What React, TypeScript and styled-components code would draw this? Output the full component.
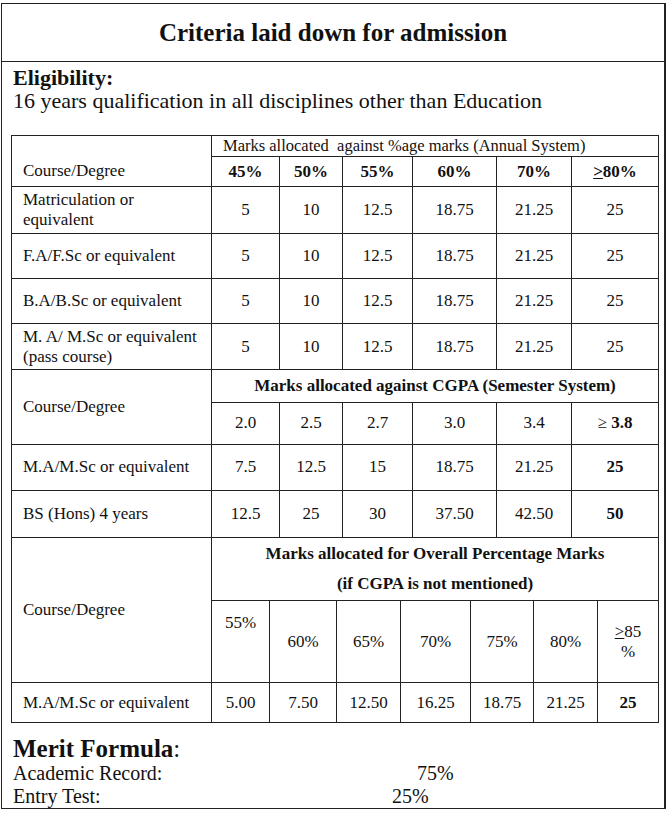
import React from "react";
import styled, { createGlobalStyle } from "styled-components";

const GlobalStyle = createGlobalStyle`
  body {
    margin: 0;
    background: #fff;
    color: #111;
    font-family: "Liberation Serif", "Times New Roman", serif;
  }
`;

type Mark = { text: React.ReactNode; bold?: boolean };

const annualRows: { course: React.ReactNode; height: number; marks: string[] }[] = [
  {
    course: (
      <>
        Matriculation or
        <br />
        equivalent
      </>
    ),
    height: 47,
    marks: ["5", "10", "12.5", "18.75", "21.25", "25"],
  },
  { course: "F.A/F.Sc or equivalent", height: 45, marks: ["5", "10", "12.5", "18.75", "21.25", "25"] },
  { course: "B.A/B.Sc or equivalent", height: 45, marks: ["5", "10", "12.5", "18.75", "21.25", "25"] },
  {
    course: (
      <>
        M. A/ M.Sc or equivalent
        <br />
        (pass course)
      </>
    ),
    height: 46,
    marks: ["5", "10", "12.5", "18.75", "21.25", "25"],
  },
];

const cgpaRows: { course: string; height: number; marks: Mark[] }[] = [
  {
    course: "M.A/M.Sc or equivalent",
    height: 46,
    marks: [{ text: "7.5" }, { text: "12.5" }, { text: "15" }, { text: "18.75" }, { text: "21.25" }, { text: "25", bold: true }],
  },
  {
    course: "BS (Hons) 4 years",
    height: 47,
    marks: [{ text: "12.5" }, { text: "25" }, { text: "30" }, { text: "37.50" }, { text: "42.50" }, { text: "50", bold: true }],
  },
];

const overallMarks: Mark[] = [
  { text: "5.00" },
  { text: "7.50" },
  { text: "12.50" },
  { text: "16.25" },
  { text: "18.75" },
  { text: "21.25" },
  { text: "25", bold: true },
];

const sixCols = [200, 68, 63, 70, 84, 75, 87];
const sevenCols = [200, 58, 67, 64, 70, 63, 64, 61];

export default function App() {
  return (
    <>
      <GlobalStyle />
      <Frame>
        <Title>Criteria laid down for admission</Title>

        <Eligibility>
          <Heading>Eligibility:</Heading>
          16 years qualification in all disciplines other than Education
        </Eligibility>

        <Tables>
          <Grid>
            <Cols widths={sixCols} />
            <tbody>
              <Row $height={20}>
                <Cell rowSpan={2} $align="left" $valign="bottom">
                  Course/Degree
                </Cell>
                <Cell colSpan={6} $align="left" $small>
                  Marks allocated&nbsp; against %age marks (Annual System)
                </Cell>
              </Row>
              <Row $height={30}>
                {["45%", "50%", "55%", "60%", "70%"].map((m) => (
                  <Cell key={m} $bold>
                    {m}
                  </Cell>
                ))}
                <Cell $bold>
                  <u>&gt;</u>80%
                </Cell>
              </Row>
              {annualRows.map((row, i) => (
                <Row key={i} $height={row.height}>
                  <Cell $align="left">{row.course}</Cell>
                  {row.marks.map((m, j) => (
                    <Cell key={j}>{m}</Cell>
                  ))}
                </Row>
              ))}
            </tbody>
          </Grid>

          <Grid>
            <Cols widths={sixCols} />
            <tbody>
              <Row $height={32}>
                <Cell rowSpan={2} $align="left">
                  Course/Degree
                </Cell>
                <Cell colSpan={6} $bold>
                  Marks allocated against CGPA (Semester System)
                </Cell>
              </Row>
              <Row $height={42}>
                {["2.0", "2.5", "2.7", "3.0", "3.4"].map((m) => (
                  <Cell key={m}>{m}</Cell>
                ))}
                <Cell>
                  ≥ <b>3.8</b>
                </Cell>
              </Row>
              {cgpaRows.map((row) => (
                <Row key={row.course} $height={row.height}>
                  <Cell $align="left">{row.course}</Cell>
                  {row.marks.map((m, j) => (
                    <Cell key={j} $bold={m.bold}>
                      {m.text}
                    </Cell>
                  ))}
                </Row>
              ))}
            </tbody>
          </Grid>

          <Grid>
            <Cols widths={sevenCols} />
            <tbody>
              <Row $height={63}>
                <Cell rowSpan={2} $align="left">
                  Course/Degree
                </Cell>
                <Cell colSpan={7} $bold $lineHeight={30}>
                  Marks allocated for Overall Percentage Marks
                  <br />
                  (if CGPA is not mentioned)
                </Cell>
              </Row>
              <Row $height={82}>
                <Cell $valign="top" $padTop={12}>
                  55%
                </Cell>
                {["60%", "65%", "70%", "75%", "80%"].map((m) => (
                  <Cell key={m}>{m}</Cell>
                ))}
                <Cell>
                  <u>&gt;</u>85
                  <br />%
                </Cell>
              </Row>
              <Row $height={40}>
                <Cell $align="left">M.A/M.Sc or equivalent</Cell>
                {overallMarks.map((m, j) => (
                  <Cell key={j} $bold={m.bold}>
                    {m.text}
                  </Cell>
                ))}
              </Row>
            </tbody>
          </Grid>
        </Tables>

        <Merit>
          <MeritTitle>
            <b>Merit Formula</b>:
          </MeritTitle>
          <FormulaRow>
            <FormulaLabel $width={404}>Academic Record:</FormulaLabel>
            <span>75%</span>
          </FormulaRow>
          <FormulaRow>
            <FormulaLabel $width={379}>Entry Test:</FormulaLabel>
            <span>25%</span>
          </FormulaRow>
        </Merit>
      </Frame>
    </>
  );
}

function Cols({ widths }: { widths: number[] }) {
  return (
    <colgroup>
      {widths.map((w, i) => (
        <col key={i} style={{ width: w }} />
      ))}
    </colgroup>
  );
}

const Frame = styled.div`
  box-sizing: border-box;
  width: 665px;
  margin: 3px 0 0 1px;
  border: 1.5px solid #222;
  border-right-width: 2px;
`;

const Title = styled.h1`
  margin: 0;
  height: 57px;
  display: flex;
  align-items: center;
  justify-content: center;
  font-size: 25px;
  font-weight: bold;
  border-bottom: 1.5px solid #222;
`;

const Eligibility = styled.section`
  height: 50px;
  padding: 4px 0 0 11px;
  box-sizing: border-box;
  font-size: 22px;
  line-height: 23px;
`;

const Heading = styled.div`
  font-weight: bold;
`;

const Tables = styled.div`
  margin: 23px 0 0 9px;
`;

const Grid = styled.table`
  width: 647px;
  border-collapse: collapse;
  table-layout: fixed;
  font-size: 17px;

  & + & tr:first-child > td {
    border-top: 0;
  }
`;

const Row = styled.tr<{ $height: number }>`
  height: ${(p) => p.$height}px;
`;

const Cell = styled.td<{
  $align?: "left" | "center";
  $valign?: "top" | "middle" | "bottom";
  $bold?: boolean;
  $small?: boolean;
  $lineHeight?: number;
  $padTop?: number;
}>`
  box-sizing: border-box;
  border: 1px solid #222;
  padding: ${(p) => p.$padTop ?? 0}px 2px 0;
  padding-left: ${(p) => (p.$align === "left" ? 11 : 2)}px;
  padding-bottom: ${(p) => (p.$valign === "bottom" ? 5 : 0)}px;
  text-align: ${(p) => p.$align ?? "center"};
  vertical-align: ${(p) => p.$valign ?? "middle"};
  font-size: ${(p) => (p.$small ? 16.5 : 17)}px;
  font-weight: ${(p) => (p.$bold ? "bold" : "normal")};
  line-height: ${(p) => p.$lineHeight ?? 20}px;
`;

const Merit = styled.div`
  height: 85px;
  box-sizing: border-box;
  padding: 13px 0 0 11px;
  font-size: 20px;
  line-height: 23px;
`;

const MeritTitle = styled.div`
  height: 26px;
  font-size: 25px;
  line-height: 26px;
`;

const FormulaRow = styled.div`
  display: flex;
  height: 23px;
`;

const FormulaLabel = styled.span<{ $width: number }>`
  width: ${(p) => p.$width}px;
`;
